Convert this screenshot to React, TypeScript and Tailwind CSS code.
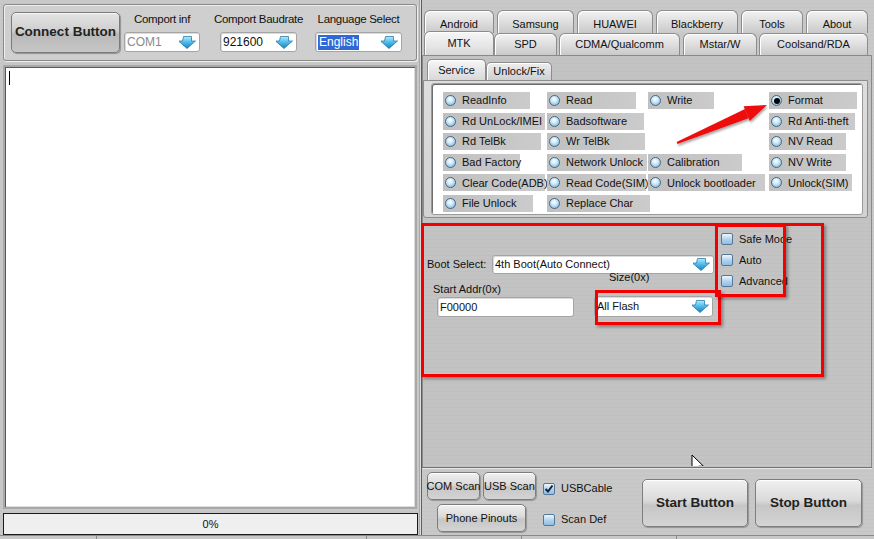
import React from "react";

const brushed =
  "bg-[repeating-linear-gradient(180deg,#cbcbcb_0px,#c4c4c4_1px,#cecece_2px,#c2c2c2_3px,#c9c9c9_4px)]";
const glossy =
  "border border-[#7d7d7d] rounded-[5px] bg-[linear-gradient(180deg,#f0f0f0_0%,#dadada_45%,#c6c6c6_55%,#d4d4d4_100%)] shadow-[inset_0_1px_0_#ffffff,1px_1px_1px_rgba(0,0,0,0.25)] flex items-center justify-center";
const tabCls =
  "h-[22px] rounded-t-[6px] border border-b-0 border-[#8c8c8c] bg-[linear-gradient(180deg,#f2f2f2_0%,#dedede_50%,#c9c9c9_100%)] shadow-[inset_1px_1px_0_#ffffff] flex items-center justify-center text-[11px]";
const tabTop =
  "h-[23px] rounded-t-[6px] border border-b-0 border-[#8c8c8c] bg-[linear-gradient(180deg,#f2f2f2_0%,#dedede_50%,#c9c9c9_100%)] shadow-[inset_1px_1px_0_#ffffff] flex items-start pt-[5px] justify-center text-[11px]";

function BlueArrow() {
  return (
    <svg width="17" height="13" viewBox="0 0 17 13">
      <defs>
        <linearGradient id="bagrad" x1="0" y1="0" x2="0" y2="1">
          <stop offset="0" stopColor="#b4ecff" />
          <stop offset="0.5" stopColor="#4cb8e8" />
          <stop offset="1" stopColor="#1a7fc0" />
        </linearGradient>
      </defs>
      <path
        d="M4.5 0.5h8v4.5h4l-8.5 7.5l-8.5-7.5h4z"
        fill="url(#bagrad)"
        stroke="#2b7bab"
        strokeWidth="0.8"
      />
    </svg>
  );
}

function Combo({ w, children }: { w: string; children: React.ReactNode }) {
  return (
    <div
      className={`${w} h-[20px] bg-white border border-[#a4a4a4] rounded-[3px] shadow-[inset_1px_1px_0_#dcdcdc] flex items-center justify-between pl-[2px] pr-[3px] text-[12px]`}
    >
      <div className="flex items-center">{children}</div>
      <BlueArrow />
    </div>
  );
}

function Radio({ on }: { on?: boolean }) {
  return (
    <span className="ml-[2px] w-[11px] h-[11px] rounded-full border border-[#4a6680] bg-[radial-gradient(circle_at_45%_35%,#ffffff_0%,#d2ebfa_35%,#6aaedb_100%)] flex items-center justify-center shrink-0">
      {on && <span className="w-[6px] h-[6px] rounded-full bg-black" />}
    </span>
  );
}

function Item({ label, w, on }: { label: string; w: string; on?: boolean }) {
  return (
    <div
      className={`${w} h-[17px] flex items-center bg-[linear-gradient(90deg,#c0c0c0,#cbcbcb)] text-[11px] whitespace-nowrap`}
    >
      <Radio on={on} />
      <span className="ml-[6px]">{label}</span>
    </div>
  );
}

function Check({ on }: { on?: boolean }) {
  return (
    <span className="w-[12px] h-[12px] rounded-[2px] border border-[#557799] bg-[linear-gradient(180deg,#eef7ff_0%,#b4d4ef_50%,#8fbde4_100%)] flex items-center justify-center shrink-0">
      {on && (
        <svg width="10" height="10" viewBox="0 0 10 10">
          <path d="M1.5 5l2.5 2.5l4.5-6" fill="none" stroke="#10243a" strokeWidth="2" />
        </svg>
      )}
    </span>
  );
}

const col1 = [
  ["ReadInfo", "w-[87px]"],
  ["Rd UnLock/IMEI", "w-[102px]"],
  ["Rd TelBk", "w-[98px]"],
  ["Bad Factory", "w-[77px]"],
  ["Clear Code(ADB)", "w-[102px]"],
  ["File Unlock", "w-[90px]"],
];
const col2 = [
  ["Read", "w-[89px]"],
  ["Badsoftware", "w-[97px]"],
  ["Wr TelBk", "w-[98px]"],
  ["Network Unlock", "w-[100px]"],
  ["Read Code(SIM)", "w-[99px]"],
  ["Replace Char", "w-[103px]"],
];
const col3: (string[] | null)[] = [
  ["Write", "w-[66px]"],
  null,
  null,
  ["Calibration", "w-[94px]"],
  ["Unlock bootloader", "w-[117px]"],
  null,
];
const col4: (string[] | null)[] = [
  ["Format", "w-[88px]"],
  ["Rd Anti-theft", "w-[86px]"],
  ["NV Read", "w-[77px]"],
  ["NV Write", "w-[77px]"],
  ["Unlock(SIM)", "w-[83px]"],
  null,
];

export default function App() {
  const cells: React.ReactNode[] = [];
  for (let r = 0; r < 6; r++) {
    const row = [col1[r], col2[r], col3[r], col4[r]];
    row.forEach((c, i) => {
      cells.push(
        <div key={`${r}-${i}`} className="h-[17px]">
          {c && <Item label={c[0]} w={c[1]} on={c[0] === "Format"} />}
        </div>
      );
    });
  }

  return (
    <div
      className={`w-[874px] h-[539px] overflow-hidden flex flex-col font-['Liberation_Sans',Arial,sans-serif] text-[#111] ${brushed}`}
    >
      <div className="flex h-[535px]">
        {/* LEFT */}
        <div className="w-[419px] flex flex-col pl-[3px] pt-[4px]">
          <div className="w-[414px] h-[57px] border border-[#8a8a8a] rounded-[3px] shadow-[inset_1px_1px_0_#eeeeee,1px_1px_0_#eeeeee] flex items-start pl-[7px] pt-[7px] bg-[repeating-linear-gradient(180deg,#d2d2d2_0px,#cbcbcb_1px,#d4d4d4_2px,#c9c9c9_3px)]">
            <div
              className={`w-[109px] h-[41px] border border-[#7a7a7a] rounded-[5px] bg-[linear-gradient(180deg,#e4e4e4_0%,#cfcfcf_45%,#b9b9b9_55%,#c6c6c6_100%)] shadow-[inset_0_1px_0_#f8f8f8,1px_1px_1px_rgba(0,0,0,0.3)] flex items-center justify-center text-[13.5px] font-bold text-[#222]`}
            >
              Connect Button
            </div>
            <div className="ml-[4px] flex flex-col items-center w-[76px]">
              <div className="h-[14px] text-[11.5px] tracking-[-0.3px] leading-[14px]">Comport inf</div>
              <div className="mt-[6px]">
                <Combo w="w-[76px]">
                  <span className="text-[#8a8a8a]">COM1</span>
                </Combo>
              </div>
            </div>
            <div className="ml-[20px] flex flex-col items-center w-[77px]">
              <div className="h-[14px] text-[11.5px] tracking-[-0.3px] leading-[14px] whitespace-nowrap">
                Comport Baudrate
              </div>
              <div className="mt-[6px]">
                <Combo w="w-[77px]">
                  <span>921600</span>
                </Combo>
              </div>
            </div>
            <div className="ml-[18px] flex flex-col items-center w-[87px]">
              <div className="h-[14px] text-[11.5px] tracking-[-0.3px] leading-[14px] whitespace-nowrap">
                Language Select
              </div>
              <div className="mt-[6px]">
                <Combo w="w-[87px]">
                  <span className="bg-[#3168d5] text-white px-[1px] leading-[15px]">English</span>
                </Combo>
              </div>
            </div>
          </div>
          <div className="mt-[4px] w-[414px] h-[444px] bg-white border-2 border-[#a8a8a8] shadow-[inset_1px_1px_0_#5a5a5a,inset_-1px_-1px_0_#dcdcdc] pl-[4px] pt-[4px]">
            <div className="w-[1px] h-[14px] bg-black" />
          </div>
          <div className="mt-[4px] w-[415px] h-[22px] bg-[#efefef] border border-[#1a1a1a] flex items-center justify-center text-[11px]">
            0%
          </div>
        </div>
        {/* divider */}
        <div className="w-[2px] bg-[#a9a9a9] border-r border-[#dcdcdc]" />
        {/* RIGHT */}
        <div className="flex-1 flex flex-col border-l border-[#5e5e5e]">
          {/* tabs */}
          <div className="h-[55px] pl-[2px] pt-[10px] flex flex-col">
            <div className="flex gap-[3px]">
              <div className={`${tabTop} w-[70px]`}>Android</div>
              <div className={`${tabTop} w-[77px]`}>Samsung</div>
              <div className={`${tabTop} w-[76px]`}>HUAWEI</div>
              <div className={`${tabTop} w-[82px]`}>Blackberry</div>
              <div className={`${tabTop} w-[62px]`}>Tools</div>
              <div className={`${tabTop} w-[62px]`}>About</div>
            </div>
            <div className="flex items-end h-[22px]">
              <div className="relative w-[70px] h-[24px] rounded-t-[6px] border border-b-0 border-[#8c8c8c] bg-[linear-gradient(180deg,#f6f6f6_0%,#e6e6e6_60%,#d8d8d8_100%)] shadow-[inset_1px_1px_0_#ffffff] flex items-start pt-[3px] justify-center text-[11px]">
                MTK
              </div>
              <div className={`${tabCls} w-[63px]`}>SPD</div>
              <div className={`${tabCls} w-[121px] ml-[2px]`}>CDMA/Qualcomm</div>
              <div className={`${tabCls} w-[74px] ml-[3px]`}>Mstar/W</div>
              <div className={`${tabCls} w-[109px] ml-[2px]`}>Coolsand/RDA</div>
            </div>
          </div>
          {/* tab page */}
          <div className="relative h-[412px] mr-[2px] border-t border-r border-[#8a8a8a] shadow-[inset_1px_0_0_#8a8a8a] bg-[repeating-linear-gradient(180deg,#c6c6c6_0px,#bfbfbf_1px,#c9c9c9_2px,#bcbcbc_3px,#c4c4c4_4px)]">
            <div className="pl-[5px] pt-[3px] flex items-end">
              <div className="w-[59px] h-[21px] rounded-t-[5px] border border-b-0 border-[#8c8c8c] bg-[linear-gradient(180deg,#f6f6f6,#d8d8d8)] shadow-[inset_1px_1px_0_#ffffff] flex items-start pt-[2px] justify-center text-[11px]">
                Service
              </div>
              <div className="w-[66px] h-[18px] rounded-t-[5px] border border-b-0 border-[#8c8c8c] bg-[linear-gradient(180deg,#eeeeee,#cfcfcf)] shadow-[inset_1px_1px_0_#ffffff] flex items-center justify-center text-[11px]">
                Unlock/Fix
              </div>
            </div>
            <div className="ml-[1px] w-[445px] h-[138px] border border-[#8c8c8c] rounded-b-[3px] bg-[linear-gradient(180deg,#dedede,#d2d2d2)] pl-[7px] pt-[2px]">
              <div className="w-[432px] h-[132px] bg-white border border-[#9a9a9a] rounded-[3px] shadow-[inset_1px_1px_0_#6e6e6e] pl-[11px] pt-[8px]">
                <div className="grid grid-cols-[104px_101px_121px_100px] gap-y-[3.6px]">{cells}</div>
              </div>
            </div>
            {/* middle */}
            <div className="flex pl-[5px]">
              <div className="w-[294px] flex flex-col pt-[37px]">
                <div className="flex items-center h-[19px]">
                  <span className="w-[65px] text-[11px] whitespace-nowrap">Boot Select:</span>
                  <div className="w-[222px] h-[19px] bg-white border border-[#a4a4a4] rounded-[3px] shadow-[inset_1px_1px_0_#dcdcdc] flex items-center justify-between pl-[2px] pr-[3px] text-[11px]">
                    <span>4th Boot(Auto Connect)</span>
                    <BlueArrow />
                  </div>
                </div>
                <div className="flex items-end">
                  <div className="flex flex-col ml-[6px]">
                    <span className="text-[11px] leading-[14px] mt-[8px]">Start Addr(0x)</span>
                    <div className="ml-[4px] mt-[1px] w-[137px] h-[20px] bg-white border border-[#a4a4a4] rounded-[3px] shadow-[inset_1px_1px_0_#dcdcdc] flex items-center pl-[2px] text-[11px]">
                      F00000
                    </div>
                  </div>
                  <div className="flex flex-col ml-[20px]">
                    <span className="text-[11px] leading-[12px] pl-[15px] mt-[-3px]">Size(0x)</span>
                    <div className="mt-[13px] w-[119px] h-[21px] bg-white border border-[#a4a4a4] rounded-[3px] shadow-[inset_1px_1px_0_#dcdcdc] flex items-center justify-between pl-[2px] pr-[3px] text-[11px]">
                      <span>All Flash</span>
                      <BlueArrow />
                    </div>
                  </div>
                </div>
              </div>
              <div className="flex flex-col gap-[9px] pt-[15px]">
                {["Safe Mode", "Auto", "Advanced"].map((t) => (
                  <div key={t} className="flex items-center h-[12px] text-[11px] whitespace-nowrap">
                    <Check />
                    <span className="ml-[6px]">{t}</span>
                  </div>
                ))}
              </div>
            </div>

            {/* annotations */}
            <div className="absolute left-[-1px] top-[167px] w-[403px] h-[154px] border-[3px] border-[#f40000] shadow-[2px_2px_3px_rgba(0,0,0,0.35)]" />
            <div className="absolute left-[173px] top-[234px] w-[126px] h-[35px] border-[3px] border-[#f40000] shadow-[2px_2px_3px_rgba(0,0,0,0.35)]" />
            <div className="absolute left-[293px] top-[168px] w-[71px] h-[73px] border-[3px] border-[#f40000] shadow-[2px_2px_3px_rgba(0,0,0,0.35)]" />
            <svg className="absolute left-0 top-0" width="450" height="410" viewBox="0 0 450 410">
              <defs>
                <filter id="sh" x="-10%" y="-10%" width="130%" height="140%">
                  <feDropShadow dx="1" dy="2" stdDeviation="1.2" floodColor="#000" floodOpacity="0.35" />
                </filter>
              </defs>
              <g filter="url(#sh)" fill="#ee1111">
                <polygon points="254.6,86.1 255.4,87.9 326.6,62.2 323.0,53.0" />
                <polygon points="345,49 321.6,50.2 327.8,65" />
              </g>
              <g transform="translate(270,399)">
                <path d="M0 0 L0 16 L4 12 L7 18.5 L9.5 17.4 L6.6 11.2 L11.5 11.2 Z" fill="#fff" stroke="#000" strokeWidth="1" />
              </g>
            </svg>
          </div>
          {/* bottom panel */}
          <div className="h-[68px] mr-[2px] border-t border-[#707070] shadow-[inset_0_1px_0_#e6e6e6] flex pl-[5px] pt-[4px] bg-[repeating-linear-gradient(180deg,#cbcbcb_0px,#c4c4c4_1px,#cecece_2px,#c2c2c2_3px,#c9c9c9_4px)]">
            <div className="w-[108px] flex flex-col">
              <div className="flex gap-[3px]">
                <div className={`${glossy} w-[53px] h-[28px] text-[11px] whitespace-nowrap`}>COM Scan</div>
                <div className={`${glossy} w-[53px] h-[28px] text-[11px] whitespace-nowrap`}>USB Scan</div>
              </div>
              <div className={`${glossy} ml-[10px] mt-[4px] w-[89px] h-[28px] text-[11px]`}>Phone Pinouts</div>
            </div>
            <div className="ml-[8px] w-[99px] flex flex-col pt-[10px]">
              <div className="flex items-center h-[13px] text-[11px]">
                <Check on />
                <span className="ml-[6px]">USBCable</span>
              </div>
              <div className="flex items-center h-[13px] mt-[18px] text-[11px]">
                <Check />
                <span className="ml-[6px]">Scan Def</span>
              </div>
            </div>
            <div className={`${glossy} mt-[7px] w-[106px] h-[48px] text-[13.5px] font-bold text-[#222]`}>Start Button</div>
            <div className={`${glossy} ml-[7px] mt-[7px] w-[107px] h-[48px] text-[13.5px] font-bold text-[#222]`}>Stop Button</div>
          </div>
        </div>
      </div>
      {/* status bar */}
      <div className="h-[4px] border-t border-[#8a8a8a] flex">
        <div className="w-[97px] border-r border-[#8a8a8a]" />
        <div className="w-[270px] border-r border-[#8a8a8a]" />
        <div className="w-[155px] border-r border-[#8a8a8a]" />
        <div className="w-[155px] border-r border-[#8a8a8a]" />
        <div className="flex-1" />
      </div>
    </div>
  );
}
